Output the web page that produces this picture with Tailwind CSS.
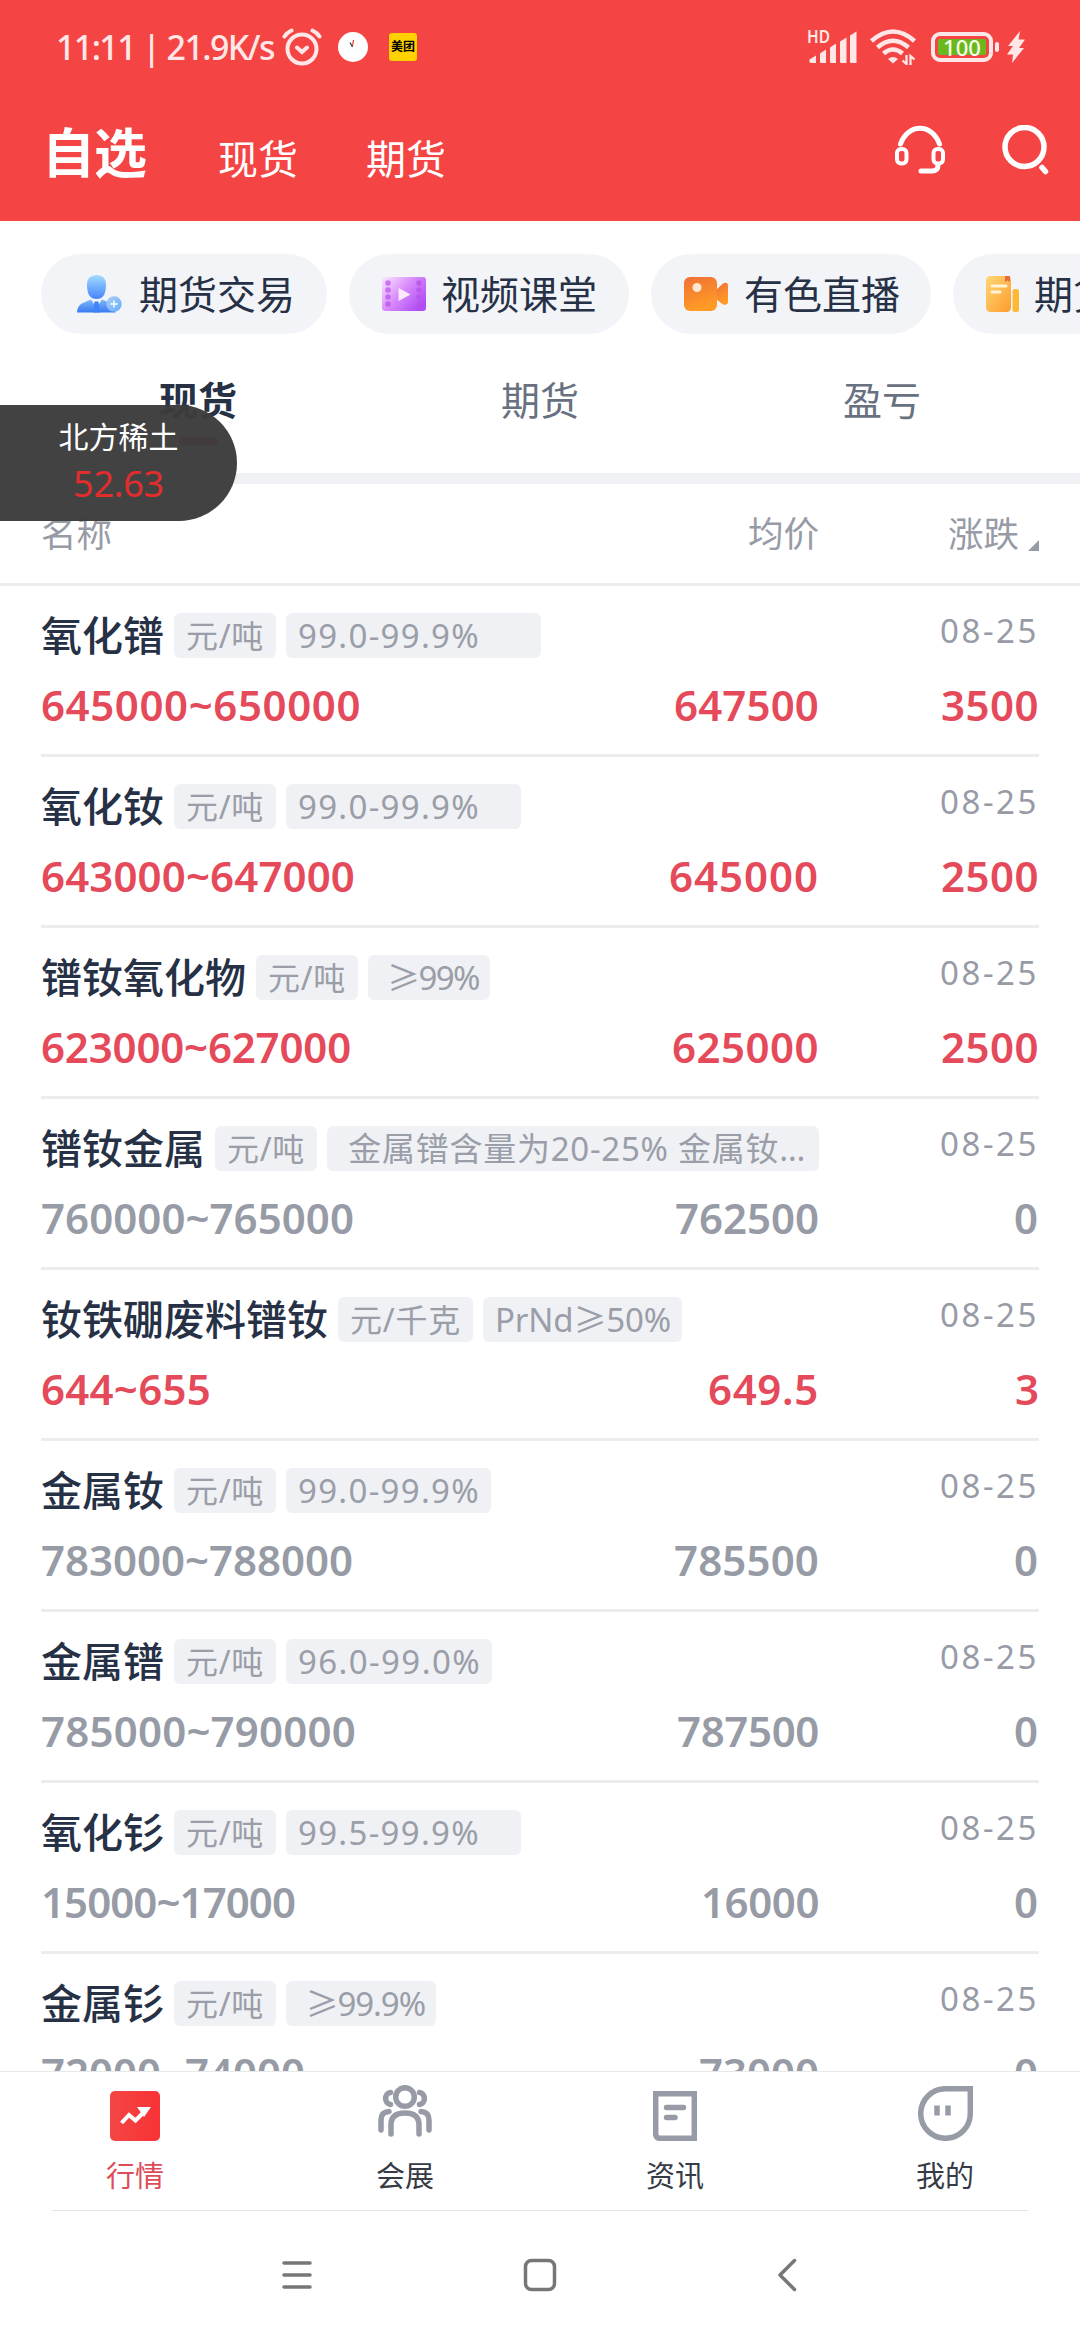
<!DOCTYPE html>
<html lang="zh-CN">
<head>
  <meta charset="UTF-8">
  <title>自选</title>
  <script src="https://cdn.jsdelivr.net/npm/@tailwindcss/browser@4"></script>
</head>
<body class="w-[1080px] h-[2340px] overflow-hidden bg-white flex flex-col relative font-['Noto_Sans','Noto_Sans_CJK_SC',sans-serif] text-[#273146]">

  <!-- Status bar + top navigation -->
  <header class="bg-[#f54444] h-[221px] shrink-0 text-white">
    <div class="h-[94px] flex items-center pl-[56px] pr-[55px] text-[#ffe7e7]">
      <span class="text-[34px] font-medium leading-none whitespace-nowrap w-[218px] tracking-[-1.7px]" data-fit="218">11:11 | 21.9K/s</span>
      <svg class="ml-[8px] w-[40px] h-[38px]" viewBox="0 0 40 38" fill="none" stroke="#ffe7e7" stroke-width="4" stroke-linecap="round">
        <circle cx="20" cy="21" r="14.5"/>
        <path d="M2.5 8.5Q5 4.500 9.500 2.500M37.500 8.500Q35 4.500 30.500 2.500M15 19.500L20 24L25 19.500"/>
      </svg>
      <svg class="ml-[16px] w-[30px] h-[30px]" viewBox="0 0 30 30" fill="none">
        <circle cx="15" cy="15" r="15" fill="#fff"/>
        <path d="M12 10.500L14.500 15" stroke="#333" stroke-width="1.200"/>
        <path d="M14.500 14L15.500 8" stroke="#d33" stroke-width="1.200"/>
      </svg>
      <span class="ml-[21px] w-[28px] h-[28px] rounded-[3px] bg-[#ffd100] text-black text-[12px] font-bold leading-[28px] text-center">美团</span>
      <div class="flex-1"></div>
      <svg class="w-[50px] h-[34px] overflow-visible" viewBox="0 0 50 34" fill="#ffe7e7">
        <text x="0" y="13" font-size="17" font-weight="600" textLength="23" lengthAdjust="spacingAndGlyphs">HD</text>
        <path d="M2.500 29.500L9 25.500V33H4Q2.500 33 2.500 31.500zM13 23.500L19 19.500V33H14.500Q13 33 13 31.500zM23 17.500L29 13.500V33H24.500Q23 33 23 31.500zM33 11.500L39.500 7.500V33H34.500Q33 33 33 31.500zM43 5.500L49.500 1.500V33H44.500Q43 33 43 31.500z"/>
      </svg>
      <svg class="ml-[13px] w-[46px] h-[36px]" viewBox="0 0 46 36" fill="none" stroke="#ffe7e7" stroke-width="4.500">
        <path d="M1.500 12Q23 -7 44.500 12M7.500 18.500Q23 5 38.500 18.500M13.500 24.500Q23 16.500 32.500 24.500"/>
        <path d="M18 30Q23 26 28 30L23 34.500z" fill="#ffe7e7" stroke="none"/>
        <path d="M36.500 26V35L32.500 31.500M40.500 36V27L44.500 30.500" stroke-width="2.300"/>
      </svg>
      <div class="ml-[15px] w-[62px] h-[30px] rounded-[9px] border-4 border-[#ffe7e7] p-[3px]">
        <div class="h-full w-full rounded-[2px] bg-[#6ab71e] text-[#f4ffe8] text-[22px] font-medium leading-[17px] text-center">100</div>
      </div>
      <div class="ml-[2px] w-[4px] h-[10px] rounded-[2px] bg-[#ffe7e7]"></div>
      <svg class="ml-[8px] w-[18px] h-[32px]" viewBox="0 0 18 32" fill="#ffe7e7"><path d="M13 0L1 15H6L0 23.500H6L5 32L17 17H12L18 8.500H11.500z"/></svg>
    </div>
    <div class="h-[127px] flex pl-[44px] pr-[30px]">
      <b class="text-[53px] leading-[60px] mt-[29px] w-[106px] whitespace-nowrap tracking-[-1px] indent-[-2px]">自选</b>
      <span class="text-[40px] leading-[60px] mt-[35px] ml-[68px] w-[81px] whitespace-nowrap">现货</span>
      <span class="text-[40px] leading-[60px] mt-[35px] ml-[67px] w-[81px] whitespace-nowrap">期货</span>
      <div class="flex-1"></div>
      <svg class="mt-[31px] w-[50px] h-[50px]" viewBox="0 0 50 50" fill="none" stroke="#fff" stroke-linecap="round">
        <path d="M5.500 19C13-2 37-2 44.500 19" stroke-width="5"/>
        <rect x="2" y="24" width="9.500" height="14.500" rx="4" stroke-width="4"/>
        <rect x="38.500" y="24" width="9.500" height="14.500" rx="4" stroke-width="4"/>
        <path d="M43 40Q43 46 37 46H26" stroke-width="5"/>
      </svg>
      <svg class="ml-[57px] mt-[31px] w-[48px] h-[50px]" viewBox="0 0 48 50" fill="none" stroke="#fff" stroke-width="5.500" stroke-linecap="round">
        <circle cx="22.500" cy="22" r="19.500"/>
        <path d="M40 42.500L43.500 46.500"/>
      </svg>
    </div>
  </header>

  <!-- Shortcut pills -->
  <div class="flex shrink-0 gap-[22px] pt-[33px] pl-[41px] overflow-hidden text-[39px] whitespace-nowrap">
    <div class="w-[286px] h-[80px] shrink-0 rounded-full bg-[#f2f4f8] flex items-center pl-[36px]">
      <svg class="w-[45px] h-[38px]" viewBox="0 0 45 38">
        <defs>
          <linearGradient id="b1" x1="0" y1="0" x2="0" y2="1"><stop offset="0" stop-color="#a2dbff"/><stop offset="1" stop-color="#4585fd"/></linearGradient>
          <linearGradient id="b2" x1="0" y1="0" x2="0" y2="1"><stop offset="0" stop-color="#7db8fd"/><stop offset="1" stop-color="#3a78f0"/></linearGradient>
          <linearGradient id="b3" x1="0" y1="0" x2="1" y2="1"><stop offset="0" stop-color="#b0cdf8"/><stop offset="1" stop-color="#62adfb"/></linearGradient>
        </defs>
        <path d="M0 37.500Q0 30 7 27.500L14 24.500L19.500 33L25 24.500L32 27.500Q38 31 38.500 37.500z" fill="url(#b2)"/>
        <path d="M17.500 26.500H21.500L23 37.500H16z" fill="#3f83fa"/>
        <path d="M10 10Q10 0 19.500 0T29 10Q29 24 19.500 24T10 10z" fill="url(#b1)"/>
        <circle cx="37" cy="29" r="7.700" fill="url(#b3)"/>
        <path d="M37 25.500V32.500M33.500 29H40.500" stroke="#e8f4ff" stroke-width="1.800"/>
      </svg>
      <span class="ml-[17px]">期货交易</span>
    </div>
    <div class="w-[280px] h-[80px] shrink-0 rounded-full bg-[#f2f4f8] flex items-center pl-[33px]">
      <svg class="w-[44px] h-[36px]" viewBox="0 0 44 36">
        <defs><linearGradient id="p1" x1="0" y1="0" x2="1" y2="0.700"><stop offset="0" stop-color="#fbe9ff"/><stop offset=".5" stop-color="#d98cfb"/><stop offset="1" stop-color="#b04df5"/></linearGradient></defs>
        <rect y="1" width="44" height="34" rx="3" fill="url(#p1)"/>
        <path d="M16.500 12L28.500 18.500L16.500 25z" fill="#fbeaff"/>
        <g fill="#b850ea" fill-opacity="0.700"><circle cx="6" cy="7" r="2.800"/><circle cx="6" cy="14" r="2.800"/><circle cx="6" cy="21" r="2.800"/><circle cx="6" cy="28" r="2.800"/><circle cx="37" cy="7" r="2.800"/><circle cx="37" cy="14" r="2.800"/><circle cx="37" cy="21" r="2.800"/><circle cx="37" cy="28" r="2.800"/></g>
      </svg>
      <span class="ml-[15px]">视频课堂</span>
    </div>
    <div class="w-[280px] h-[80px] shrink-0 rounded-full bg-[#f2f4f8] flex items-center pl-[33px]">
      <svg class="w-[44px] h-[36px]" viewBox="0 0 44 36">
        <defs><linearGradient id="o1" x1="0" y1="0" x2="0.300" y2="1"><stop offset="0" stop-color="#f07038"/><stop offset="1" stop-color="#ff9c24"/></linearGradient></defs>
        <path d="M32 14L39 7.500Q44 5 44 10V25Q44 30 39 28.500L32 23z" fill="url(#o1)"/>
        <rect y="1" width="33" height="34" rx="6" fill="url(#o1)"/>
        <circle cx="13" cy="11.500" r="4.500" fill="#ffe8d2"/>
      </svg>
      <span class="ml-[16px]">有色直播</span>
    </div>
    <div class="w-[280px] h-[80px] shrink-0 rounded-full bg-[#f2f4f8] flex items-center pl-[33px]">
      <svg class="w-[33px] h-[36px]" viewBox="0 0 33 36">
        <defs><linearGradient id="y1" x1="0" y1="0" x2="1" y2="1"><stop offset="0" stop-color="#ffd777"/><stop offset="1" stop-color="#fd9c2b"/></linearGradient></defs>
        <rect width="25" height="36" rx="4.500" fill="url(#y1)"/>
        <rect x="26.500" y="13" width="6.500" height="23" rx="2.500" fill="#fdb836"/>
        <path d="M19 0H24V6L21.500 4.500L19 6z" fill="#ec6a35"/>
        <path d="M6 10H20M6 16H14" stroke="#fff4d8" stroke-width="3" stroke-linecap="round"/>
      </svg>
      <span class="ml-[15px]">期货</span>
    </div>
  </div>

  <!-- Market tabs -->
  <div class="flex shrink-0 h-[139px] px-[27px] text-[39px] leading-[60px] text-[#68717f] text-center">
    <div class="flex-1 pt-[36px] font-bold text-[#273146]">现货<div class="mx-auto mt-[7px] w-[39px] h-[8px] rounded-full bg-[#f54444]"></div></div>
    <div class="flex-1 pt-[36px]">期货</div>
    <div class="flex-1 pt-[36px]">盈亏</div>
  </div>
  <div class="h-[11px] shrink-0 bg-[#f0f1f4]"></div>

  <!-- Column headings -->
  <div class="flex shrink-0 h-[102px] border-b-[3px] border-[#ececec] px-[41px] text-[35.5px] leading-[99px] text-[#979ba6]">
    <div class="w-[400px]">名称</div>
    <div class="w-[378px] text-right">均价</div>
    <div class="flex-1 flex justify-end">涨跌<svg class="ml-[9px] mt-[56px] w-[11px] h-[11px]" viewBox="0 0 11 11" fill="#979ba6"><path d="M0 11L11 0V11z"/></svg></div>
  </div>

  <!-- Price list -->
  <main id="list" class="flex-1 min-h-0 overflow-hidden px-[41px]"></main>

  <!-- Bottom tab bar -->
  <nav class="h-[139px] shrink-0 border-t border-[#e8e8ea] bg-white flex text-[29px] leading-[40px] text-[#363b46] text-center">
    <div class="flex-1 flex flex-col items-center text-[#dc4c5b]">
      <svg class="mt-[19px] w-[50px] h-[50px]" viewBox="0 0 50 50">
        <defs><linearGradient id="r1"><stop offset="0" stop-color="#f24644"/><stop offset="1" stop-color="#f93236"/></linearGradient></defs>
        <rect width="50" height="50" rx="5" fill="url(#r1)"/>
        <path d="M11.500 32L19 24L25.500 29.500L35 20" stroke="#fff" stroke-width="4" fill="none"/>
        <path d="M27 16H41L34 26z" fill="#fff"/>
      </svg>
      <span class="mt-[15px]">行情</span>
    </div>
    <div class="flex-1 flex flex-col items-center">
      <svg class="mt-[13px] w-[54px] h-[52px]" viewBox="0 0 54 52" fill="none" stroke="#979ba6" stroke-width="5.500" stroke-linecap="round">
        <circle cx="27" cy="12" r="9.300"/>
        <path d="M13 49V40Q13 28 27 28T41 40V49M12.500 7.500C6 8.500 6 18.500 12.500 19.500M41.500 7.500C48 8.500 48 18.500 41.500 19.500M3 45V35Q3 27 11 26.500M51 45V35Q51 27 43 26.500"/>
      </svg>
      <span class="mt-[19px]">会展</span>
    </div>
    <div class="flex-1 flex flex-col items-center">
      <svg class="mt-[19px] w-[44px] h-[50px]" viewBox="0 0 44 50" fill="none" stroke="#979ba6" stroke-width="5.500">
        <path d="M2.700 2.700H41.300V47.300H7Q2.700 47.300 2.700 43z"/>
        <path d="M13.500 16.500H30.500M13.500 26.500H22" stroke-linecap="round"/>
      </svg>
      <span class="mt-[15px]">资讯</span>
    </div>
    <div class="flex-1 flex flex-col items-center">
      <svg class="mt-[14px] w-[55px] h-[55px]" viewBox="0 0 55 55" fill="none" stroke="#979ba6" stroke-width="5.500">
        <path d="M27.500 2.700H52.300V27.500A24.800 24.800 0 1 1 27.500 2.700z"/>
        <path d="M19 19.500V29.500M30 19.500V29.500"/>
      </svg>
      <span class="mt-[15px]">我的</span>
    </div>
  </nav>

  <!-- System navigation -->
  <div class="h-[130px] shrink-0 mx-[52px]">
    <div class="h-px bg-[#e2e2e2]"></div>
    <div class="flex items-center pt-[47px] text-[#777]">
      <svg class="ml-[230px] w-[30px] h-[34px]" viewBox="0 0 30 34" fill="none" stroke="currentColor" stroke-width="3.500" stroke-linecap="round"><path d="M2 5H28M2 17H28M2 29H28"/></svg>
      <svg class="ml-[211px] w-[34px] h-[34px]" viewBox="0 0 34 34" fill="none" stroke="currentColor" stroke-width="3.500"><rect x="2.500" y="2.500" width="29" height="29" rx="6"/></svg>
      <svg class="ml-[220px] w-[20px] h-[34px]" viewBox="0 0 20 34" fill="none" stroke="currentColor" stroke-width="3.500" stroke-linecap="round" stroke-linejoin="round"><path d="M17.500 2.500L3 17L17.500 31.500"/></svg>
    </div>
  </div>

  <!-- Floating quote -->
  <div class="absolute left-0 top-[405px] w-[237px] h-[116px] rounded-r-full bg-[#3c3c3c]/97 text-center">
    <div class="mt-[12px] text-[30px] leading-[40px] text-white">北方稀土</div>
    <div class="mt-[6px] text-[36px] leading-[42px] text-[#e32d2d]"><span data-fit="91">52.63</span></div>
  </div>

  <script>
    // name, unit, spec, spec width, range, range width, average, average width, change, change width
    const rows = [
      ["氧化镨", "元/吨", "99.0-99.9%", 255, "645000~650000", 320, "647500", 145, "3500", 98],
      ["氧化钕", "元/吨", "99.0-99.9%", 235, "643000~647000", 314, "645000", 150, "2500", 98],
      ["镨钕氧化物", "元/吨", " ≥99%", 122, "623000~627000", 310, "625000", 147, "2500", 98],
      ["镨钕金属", "元/吨", " 金属镨含量为20-25% 金属钕…", 492, "760000~765000", 313, "762500", 144, "0", 25],
      ["钕铁硼废料镨钕", "元/千克", "PrNd≥50%", 199, "644~655", 170, "649.5", 111, "3", 24],
      ["金属钕", "元/吨", "99.0-99.9%", 205, "783000~788000", 312, "785500", 145, "0", 25],
      ["金属镨", "元/吨", "96.0-99.0%", 206, "785000~790000", 315, "787500", 142, "0", 25],
      ["氧化钐", "元/吨", "99.5-99.9%", 235, "15000~17000", 254, "16000", 118, "0", 25],
      ["金属钐", "元/吨", " ≥99.9%", 150, "72000~74000", 264, "73000", 120, "0", 25],
    ];
    const specText = { "99.0-99.9%": 182, "96.0-99.0%": 183, "99.5-99.9%": 182, " ≥99%": 99, " ≥99.9%": 127, "PrNd≥50%": 176, " 金属镨含量为20-25% 金属钕…": 467 };

    document.getElementById("list").innerHTML = rows.map(r => `
      <div class="h-[171px] border-b-[3px] border-[#ececec]">
        <div class="flex items-center pt-[27px] h-[72px] gap-[10px] whitespace-nowrap">
          <span class="text-[41px] leading-[45px] font-medium">${r[0]}</span>
          <span class="h-[45px] px-[12px] rounded-[6px] bg-[#f0f1f4] text-[32px] leading-[46px] text-[#9a9ea8]"><span data-fit="${r[1].length == 3 ? 78 : 111}">${r[1]}</span></span>
          <span class="h-[45px] shrink-0 pl-[12px] rounded-[6px] bg-[#f0f1f4] text-[33px] leading-[46px] text-[#9a9ea8] whitespace-pre" style="width:${r[3]}px"><span data-fit="${specText[r[2]]}">${r[2]}</span></span>
          <span class="ml-auto self-start text-[33px] leading-[36px] text-[#979ba6]"><span data-fit="99">08-25</span></span>
        </div>
        <div class="flex pt-[17px] text-[42px] leading-[60px] font-semibold ${r[8] == "0" ? "text-[#979ba6]" : "text-[#e44a5a]"}">
          <div class="w-[400px]"><span data-fit="${r[5]}">${r[4]}</span></div>
          <div class="w-[378px] text-right"><span data-fit="${r[7]}">${r[6]}</span></div>
          <div class="flex-1 text-right"><span data-fit="${r[9]}">${r[8]}</span></div>
        </div>
      </div>`).join("");

    // spread the letters so that each text takes its own width
    function fitTexts() {
      document.querySelectorAll("[data-fit]").forEach(el => {
        el.style.letterSpacing = "0px";
        const range = document.createRange();
        range.selectNodeContents(el);
        const gap = (el.dataset.fit - range.getBoundingClientRect().width) / el.textContent.length;
        el.style.letterSpacing = gap + "px";
      });
    }
    window.addEventListener("load", fitTexts);
    new ResizeObserver(fitTexts).observe(document.getElementById("list"));
  </script>

</body>
</html>
